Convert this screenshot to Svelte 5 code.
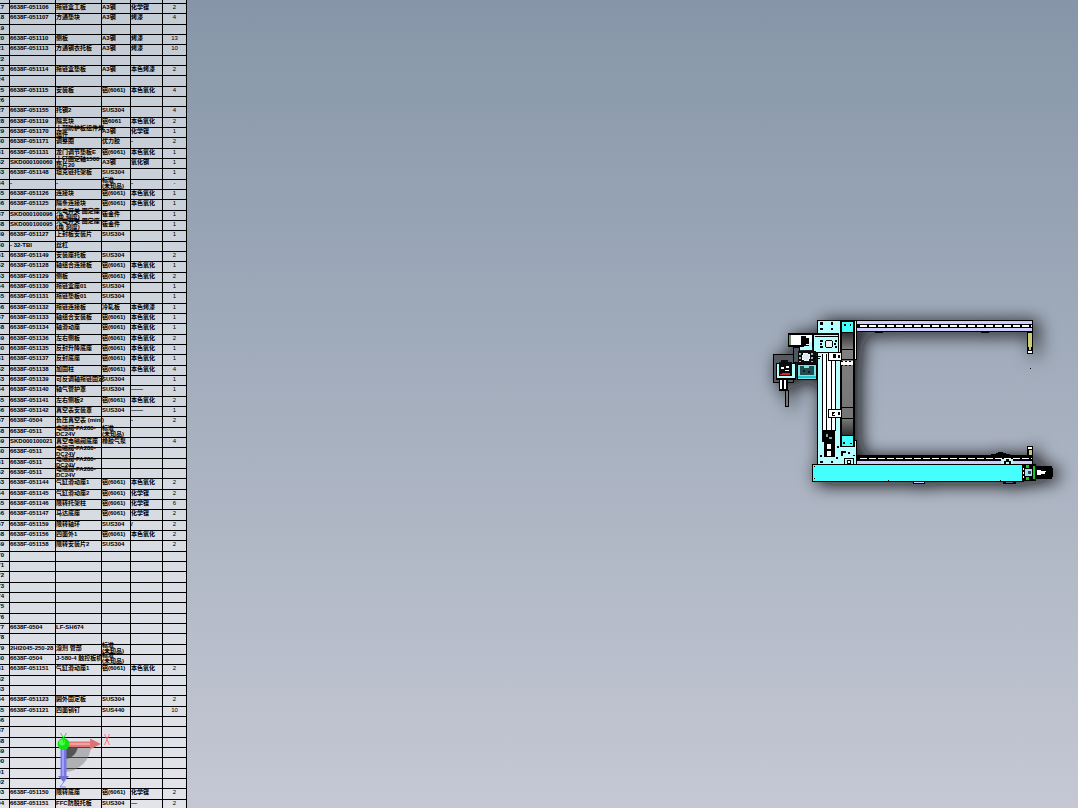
<script lang="ts">
  type Row = { no: number; cells: string[] };

  const FIRST_NO = 16;
  const LAST_NO = 94;

  const AL = '铝(6061)';
  const SUS = 'SUS304';
  const OX = '本色氧化';
  const NI = '化学镍';
  const STD = '标准\n(未知品)';

  // code, name, material, finish, quantity
  const parts: Record<number, string[]> = {
    16: ['', '吊环座', '', '', ''],
    17: ['6638F-051106', '拖链盒工板', 'A3钢', NI, '2'],
    18: ['6638F-051107', '方通垫块', 'A3钢', '烤漆', '4'],
    20: ['6638F-051110', '侧板', 'A3钢', '烤漆', '13'],
    21: ['6638F-051113', '方通钢衣托板', 'A3钢', '烤漆', '10'],
    23: ['6638F-051114', '拖链盒垫板', 'A3钢', '本色烤漆', '2'],
    25: ['6638F-051115', '安装板', AL, OX, '4'],
    27: ['6638F-051155', '托钢2', SUS, '', '4'],
    28: ['6638F-051119', '隔离块', '铝6061', OX, '2'],
    29: ['6638F-051170', '上部防护板组件焊\n组件', 'A3钢', NI, '1'],
    30: ['6638F-051171', '调整圈', '优力胶', '-', '2'],
    31: ['6638F-051131', '龙门调节垫板E', AL, OX, '1'],
    32: ['SKD000100060', '上钉固定轴1500\n垫片20', 'A3钢', '氧化钢', '1'],
    33: ['6638F-051148', '坦克链托架板', SUS, '', '1'],
    34: ['-', '-', STD, '-', '-'],
    35: ['6638F-051126', '连接块', AL, OX, '1'],
    36: ['6638F-051125', '隔条连接块', AL, OX, '1'],
    37: ['SKD000100096', '光电开关 固定座\n(角 刻度)', '钣金件', '', '1'],
    38: ['SKD000100095', '光电开关 固定座\n(角 刻度)', '钣金件', '', '1'],
    39: ['6638F-051127', '上封板安装片', SUS, '', '1'],
    40: ['- 32-TBI', '丝杠', '', '', ''],
    41: ['6638F-051149', '安装座托板', SUS, '', '2'],
    42: ['6638F-051128', '轴组合连接板', AL, OX, '1'],
    43: ['6638F-051129', '侧板', AL, OX, '2'],
    44: ['6638F-051130', '拖链盒座01', SUS, '', '1'],
    45: ['6638F-051131', '拖链垫板01', SUS, '', '1'],
    46: ['6638F-051132', '拖链连接板', '冷轧板', '本色烤漆', '1'],
    47: ['6638F-051133', '轴组合安装板', AL, OX, '1'],
    48: ['6638F-051134', '轴滑动座', AL, OX, '1'],
    49: ['6638F-051136', '左右侧板', AL, OX, '2'],
    50: ['6638F-051135', '反封升降底座', AL, OX, '1'],
    51: ['6638F-051137', '反封底座', AL, OX, '1'],
    52: ['6638F-051138', '加固柱', AL, OX, '4'],
    53: ['6638F-051139', '可反调轴拖链固定', SUS, '', '1'],
    54: ['6638F-051140', '轴气管护罩', SUS, '——', '1'],
    55: ['6638F-051141', '左右侧板2', AL, OX, '2'],
    56: ['6638F-051142', '真空表安装罩', SUS, '——', '1'],
    57: ['6638F-0504', '负压真空表 (mini)', '', '-', '2'],
    58: ['6638F-0511', '电磁阀-FA280-\nDC24V', STD, '', ''],
    59: ['SKD000100021', '真空电磁阀底座', '橡胶气泵', '', '4'],
    60: ['6638F-0511', '电磁阀-FA280-\nDC24V', '', '', ''],
    61: ['6638F-0511', '电磁阀-FA280-\nDC24V', '', '', ''],
    62: ['6638F-0511', '电磁阀-FA280-\nDC24V', '', '', ''],
    63: ['6638F-051144', '气缸滑动座1', AL, OX, '2'],
    64: ['6638F-051145', '气缸滑动座2', AL, NI, '2'],
    65: ['6638F-051146', '限转托架柱', AL, NI, '6'],
    66: ['6638F-051147', '马达底座', AL, NI, '2'],
    67: ['6638F-051159', '限转轴环', SUS, '/', '2'],
    68: ['6638F-051156', '四面外1', AL, OX, '2'],
    69: ['6638F-051158', '限转安装片2', SUS, '', '2'],
    77: ['6638F-0504', 'LF-SH674', '', '', ''],
    79: ['2HI2045-250-28', '溶剂 管部', STD, '', ''],
    80: ['6638F-0504', 'J-580-4 触控板机', STD, '', ''],
    81: ['6638F-051151', '气缸滑动座1', AL, OX, '2'],
    84: ['6638F-051123', '圆外固定板', SUS, '', '2'],
    85: ['6638F-051121', '四面销钉', 'SUS440', '', '10'],
    93: ['6638F-051150', '限转底座', AL, NI, '2'],
    94: ['6638F-051151', 'FFC防脱托板', SUS, '—', '2']
  };

  const rows: Row[] = [];
  for (let no = FIRST_NO; no <= LAST_NO; no++) {
    rows.push({ no, cells: parts[no] ?? ['', '', '', '', ''] });
  }
</script>

<main class="viewport">
  <div class="bom">
    <table>
      <colgroup>
        <col class="c-no" />
        <col class="c-code" />
        <col class="c-name" />
        <col class="c-mat" />
        <col class="c-finish" />
        <col class="c-qty" />
      </colgroup>
      <tbody>
        {#each rows as row}
          <tr>
            <td class="no"><div>{row.no}</div></td>
            {#each row.cells as cell, i}
              <td class:qty={i === 4}><div>{cell}</div></td>
            {/each}
          </tr>
        {/each}
      </tbody>
    </table>

    <svg class="triad" width="70" height="65" viewBox="50 725 70 65">
      <path d="M64 745H91A27 27 0 0 1 64 772Z" fill="#808080" fill-opacity=".5" />
      <path d="M64 745H78A14 14 0 0 1 64 759Z" fill="#444" fill-opacity=".85" />
      <path d="M66 741.500H90V747H66Z" fill="#e07878" />
      <path d="M66 743H90V745H66Z" fill="#f5a0a0" />
      <path d="M90 738.500L101 744L90 749.500Z" fill="#d87474" />
      <path d="M60.500 746H66.500V777H60.500Z" fill="#7777e8" />
      <path d="M62 746H64V777H62Z" fill="#a0a0ff" />
      <path d="M58 776H69L63.500 782Z" fill="#7070d0" />
      <path d="M66 779L60 787H66" fill="none" stroke="#8585ff" />
      <circle cx="63.500" cy="744" r="6" fill="#14e014" />
      <circle cx="62" cy="742.500" r="3" fill="#4cff4c" />
      <path d="M60.500 733L63.500 738L66.500 733M63.500 738V743" fill="none" stroke="#1be81b" />
      <path d="M104.500 734L109.500 745M109.500 734L104.500 745" fill="none" stroke="#ff7676" />
    </svg>
  </div>

  <svg class="model" viewBox="187 0 891 808" preserveAspectRatio="xMidYMid meet">
    <defs>
      <filter id="shade" x="-20%" y="-20%" width="140%" height="140%">
        <feDropShadow dx="5" dy="2" stdDeviation="9" flood-color="#08090c" flood-opacity="1" />
      </filter>
      <linearGradient id="belt" x1="0" y1="0" x2="0" y2="1">
        <stop offset="0" stop-color="#303030" />
        <stop offset=".16" stop-color="#808080" />
        <stop offset=".85" stop-color="#747474" />
        <stop offset="1" stop-color="#303030" />
      </linearGradient>
    </defs>

    <g filter="url(#shade)" shape-rendering="crispEdges">
      <!-- upper rail -->
      <rect x="856" y="320" width="177" height="12" fill="#000" />
      <rect x="857" y="321" width="175" height="3" fill="#ccccff" />
      <rect x="857" y="328" width="175" height="3" fill="#ccccff" />
      <path d="M860 326H1032" stroke="#fff" stroke-width="2" stroke-dasharray="7 2" />
      <path d="M875 332.500H883M981 332.500H989" stroke="#000" />
      <path d="M1027 332H1033V354H1027Z" fill="#000" />
      <path d="M1028 333H1032V347H1031V350H1029V347H1028Z" fill="#cccc70" />
      <path d="M1028 351H1032V353H1028Z" fill="#fff" />
      <rect x="1030" y="368" width="1" height="1" />

      <!-- lower rail -->
      <rect x="856" y="455" width="177" height="10" fill="#000" />
      <path d="M860 458.500H1032" stroke="#fff" stroke-dasharray="7 2" />
      <rect x="857" y="461" width="175" height="3" fill="#ccccff" />
      <path d="M991 455V454H996V453H998V452H1003V453H1006V454H1010V456H991Z" />
      <path d="M1001 459H1013V464H1001Z" fill="#b8ffff" />
      <path d="M1004 464V461H1006V459H1009V461H1011V464H1009V462H1006V464Z" />
      <rect x="1027" y="446" width="6" height="10" />
      <path d="M1028 448H1032" stroke="#fff" stroke-width="2" />
      <path d="M1030 450V455" stroke="#c8c870" stroke-width="3" />

      <!-- column -->
      <rect x="817.500" y="320.500" width="39" height="39" fill="#b4ffff" stroke="#000" />
      <rect x="817.500" y="320.500" width="23" height="144" fill="#b4ffff" stroke="#000" />
      <rect x="817.500" y="440.500" width="39" height="24" fill="#b4ffff" stroke="#000" />
      <path d="M818 440.500H841" stroke="#b4ffff" />
      <rect x="822" y="354" width="13" height="78" fill="#fff" />
      <path d="M822.500 354V431M826.500 354V431M831.500 354V431M835.500 354V431" stroke="#000" />
      <rect x="840" y="321" width="15" height="126" fill="#000" />
      <rect x="842" y="322" width="11" height="10" fill="#44ffff" />
      <rect x="842" y="333" width="11" height="102" fill="url(#belt)" />
      <rect x="842" y="436" width="11" height="10" fill="#44ffff" />
      <path d="M842 349.500H853M842 359.500H853M842 407.500H853M842 418.500H853" stroke="#000" />
      <path d="M841 361H853V365H841Z" fill="#fff" />
      <path d="M841 361.500H853M841 365.500H853" stroke="#000" stroke-dasharray="2 2" />
      <path d="M820 322H823V325H820ZM831 322H833V325H831ZM820 328H823V330H820ZM831 328H833V330H831ZM844 324H846V326H844ZM850 324H851V326H850ZM843 442H845V444H843ZM850 443H852V444H850Z" />

      <!-- carriage plates -->
      <rect x="813.500" y="334.500" width="25" height="18" fill="#b4ffff" stroke="#000" />
      <path d="M814 333.500H839M815 336.500H838" stroke="#000" />
      <circle cx="829" cy="344" r="4" fill="#eee" stroke="#000" />
      <path d="M820 340H823V342H820ZM820 343H822V345H820ZM820 346H823V348H820ZM835 340H837V342H835ZM834 343H836V345H834ZM835 346H837V348H835Z" />
      <rect x="828.500" y="352.500" width="13" height="8" fill="#fff" stroke="#000" />
      <path d="M833 354H836V358H833ZM838 355H840V358H838Z" />
      <rect x="828.500" y="409.500" width="13" height="8" fill="#fff" stroke="#000" />
      <path d="M832 412H835V416H832ZM838 412H840V415H838Z" />
      <path d="M834 413H835V415H833V414H834Z" fill="#fff" />

      <!-- vertical motor -->
      <rect x="822" y="430" width="13" height="12" fill="#050505" />
      <path d="M826 434H828V437H832V439H829V437H826Z" fill="#78a8a8" />
      <rect x="824" y="442" width="11" height="15" fill="#050505" />
      <path d="M827 444H831V449H827ZM827 451H831V456H827Z" fill="#fff" />
      <path d="M820 455H822V457H820ZM820 461H823V463H820ZM831 461H833V463H831ZM837 446H839V448H837ZM841 451H846V453H843V456H841ZM848 452H850V454H848ZM836 457H838V459H836ZM853 455H855V456H853Z" />
      <rect x="844.500" y="458.500" width="9" height="6" fill="#b4ffff" stroke="#000" />
      <circle cx="849" cy="462" r="2" fill="#fff" stroke="#000" />

      <!-- tool head -->
      <rect x="789" y="334" width="24" height="12" fill="#fff" stroke="#000" stroke-width="2" />
      <path d="M790 335V345" stroke="#709070" stroke-width="2" />
      <path d="M801 336H806V338H809V344H806V346H801Z" />
      <path d="M793 347H799V362H793Z" fill="#50565e" stroke="#000" />
      <path d="M800 350H812V342H809V346H804V347H800Z" fill="#b4ffff" />
      <rect x="798" y="351" width="18" height="13" fill="#111" />
      <circle cx="806" cy="357" r="4" fill="#dce8f0" stroke="#fff" stroke-dasharray="2 1" />
      <path d="M800 353V362M812 353V362" stroke="#a0b0b8" stroke-width="2" stroke-dasharray="2 2" />
      <path d="M813 356H823M813 358H820" stroke="#000" stroke-dasharray="3 2" />
      <rect x="797.500" y="364.500" width="19" height="15" fill="#70e8e8" stroke="#000" />
      <path d="M800 366H804V368H809V366H814V375H800Z" fill="#204c50" />
      <path d="M803 370H805V372H803ZM808 371H810V373H808Z" fill="#0a1c20" />
      <path d="M798 377H816" stroke="#20c0d0" stroke-width="2" />
      <rect x="773.500" y="354.500" width="20" height="28" fill="#555a62" stroke="#000" />
      <rect x="776" y="363" width="20" height="17" fill="#000" />
      <rect x="777" y="364" width="18" height="14" fill="#b4ffff" />
      <path d="M779 362H781V360H788V362H792V376H779Z" fill="#111" />
      <path d="M781 367H784V369H781ZM786 366H789V368H786ZM785 370H789V371H785Z" fill="#fff" />
      <path d="M780 374H782V373H790V375H780Z" fill="#e02828" />
      <rect x="779" y="379" width="9" height="12" fill="#000" />
      <path d="M781 380V389M785 380V389" stroke="#fff" stroke-width="2" />
      <rect x="785.500" y="390.500" width="3" height="16" fill="#777" stroke="#000" />

      <!-- base beam and drive -->
      <rect x="812.500" y="464.500" width="211" height="17" fill="#44ffff" stroke="#000" />
      <path d="M814 466H815V467H814ZM814 478H815V479H814ZM888 480H889V481H888ZM1000 480H1001V481H1000Z" />
      <path d="M913 482H925V484H913ZM1003 482H1016V484H1003Z" />
      <path d="M914 482.500H924" stroke="#ccccff" />
      <path d="M1006 482.500H1013" stroke="#667" />
      <rect x="1022" y="464" width="14" height="17" fill="#000" />
      <path d="M1026 465H1029V468H1026ZM1026 477H1029V480H1026ZM1033 466H1035V479H1033Z" fill="#18c828" />
      <path d="M1025 469H1032V476H1025Z" fill="#a8dcf0" />
      <path d="M1028 471H1031V474H1028Z" fill="#204c60" />
      <path d="M1023.500 468V479" stroke="#fff" stroke-dasharray="2 2" />
      <path d="M1036 466H1052V468H1053V477H1052V479H1036Z" fill="#050505" />
      <path d="M1037 470H1041V471H1043V474H1041V475H1037ZM1043 471H1046V472H1045V474H1043Z" fill="#fff" />
    </g>
  </svg>
</main>

<style>
  :global(body) {
    margin: 0;
  }

  .viewport {
    display: flex;
    height: 100vh;
    overflow: hidden;
    background: linear-gradient(#8696a8, #a5afbe 50%, #c5c8d4);
  }

  .bom {
    position: relative;
    flex: none;
    overflow: hidden;
  }

  table {
    width: 187px;
    margin-top: -6px;
    table-layout: fixed;
    border-collapse: separate;
    border-spacing: 0;
    background: rgba(255, 255, 255, 0.5);
    color: #000;
    font-family: 'Liberation Sans Narrow', 'Liberation Sans', 'Noto Sans CJK SC', sans-serif;
    font-size: 6px;
    font-weight: 700;
    line-height: 6px;
  }

  .c-no {
    width: 10px;
  }

  .c-code,
  .c-name {
    width: 46px;
  }

  .c-mat {
    width: 29px;
  }

  .c-finish {
    width: 32px;
  }

  .c-qty {
    width: 24px;
  }

  tr {
    height: 10px;
  }

  tr:nth-child(3n) {
    height: 11px;
  }

  td {
    box-sizing: border-box;
    padding: 0;
    border-right: 1px solid #000;
    border-bottom: 1px solid #000;
    vertical-align: top;
  }

  td div {
    display: flex;
    align-items: center;
    height: 5px;
    white-space: pre;
  }

  .no div {
    justify-content: flex-end;
    padding-right: 5px;
  }

  .qty div {
    justify-content: center;
    font-weight: 400;
  }

  .triad {
    position: absolute;
    left: 50px;
    bottom: 18px;
  }

  .model {
    flex: 1;
    min-width: 0;
    height: 100%;
  }
</style>
